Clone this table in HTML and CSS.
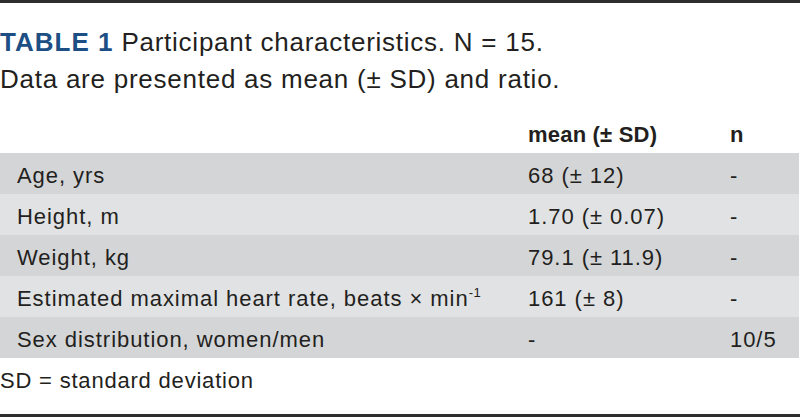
FILE: index.html
```html
<!DOCTYPE html>
<html lang="en">
<head>
<meta charset="utf-8">
<title>Table 1</title>
<link rel="stylesheet" href="styles.css">
</head>
<body>
<div class="sheet">
  <div class="caption">
    <p class="caption-line"><span class="label">TABLE 1</span> Participant characteristics. N = 15.</p>
    <p class="caption-line">Data are presented as mean (± SD) and ratio.</p>
  </div>
  <div class="table">
    <div class="row head">
      <div class="cell name"></div>
      <div class="cell">mean (± SD)</div>
      <div class="cell">n</div>
    </div>
    <div class="row dark">
      <div class="cell name">Age, yrs</div>
      <div class="cell">68 (± 12)</div>
      <div class="cell">-</div>
    </div>
    <div class="row light">
      <div class="cell name">Height, m</div>
      <div class="cell">1.70 (± 0.07)</div>
      <div class="cell">-</div>
    </div>
    <div class="row dark">
      <div class="cell name">Weight, kg</div>
      <div class="cell">79.1 (± 11.9)</div>
      <div class="cell">-</div>
    </div>
    <div class="row light">
      <div class="cell name">Estimated maximal heart rate, beats × min<sup class="sup">-1</sup></div>
      <div class="cell">161 (± 8)</div>
      <div class="cell">-</div>
    </div>
    <div class="row dark">
      <div class="cell name">Sex distribution, women/men</div>
      <div class="cell">-</div>
      <div class="cell">10/5</div>
    </div>
  </div>
  <p class="footnote">SD = standard deviation</p>
</div>
</body>
</html>
```

FILE: styles.css
```css
* { box-sizing: border-box; }
html, body { margin: 0; padding: 0; background: #ffffff; }
body {
  font-family: "Liberation Sans", Arial, Helvetica, sans-serif;
  color: #231f20;
}
.sheet {
  width: 800px;
  height: 417px;
  border-top: 3px solid #2e2e2e;
  border-bottom: 3px solid #2e2e2e;
  display: flex;
  flex-direction: column;
}
.caption {
  padding-top: 21px;
}
.caption-line {
  margin: 0;
  font-size: 26px;
  line-height: 37px;
  letter-spacing: 0.75px;
}
.label {
  color: #1d4f85;
  font-weight: bold;
  letter-spacing: 1px;
}
.table {
  margin-top: 14px;
  width: 799px;
}
.row {
  display: grid;
  grid-template-columns: 528px 202px 1fr;
  height: 41px;
  font-size: 22px;
  line-height: 37px;
  padding-top: 4px;
  letter-spacing: 0.95px;
}
.head { font-weight: bold; letter-spacing: 0.2px; }
.dark { background: #d4d5d7; }
.light { background: #e1e2e4; }
.cell { white-space: nowrap; }
.name { padding-left: 17px; }
.sup {
  font-size: 13px;
  line-height: 0;
  vertical-align: 9px;
  letter-spacing: 0.5px;
}
.footnote {
  margin: 0;
  padding-top: 8px;
  font-size: 22px;
  line-height: 30px;
  letter-spacing: 0.8px;
}
```
